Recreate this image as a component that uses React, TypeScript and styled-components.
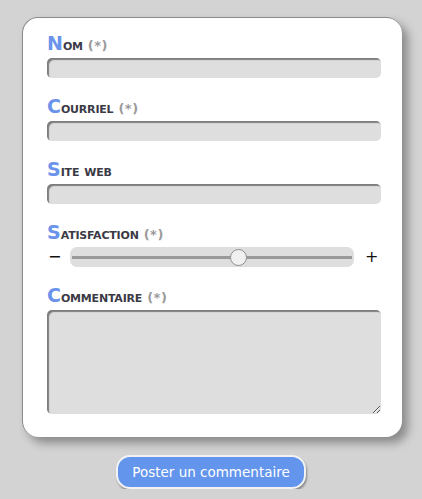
import React from "react";
import styled, { createGlobalStyle } from "styled-components";

const Global = createGlobalStyle`
  html, body { margin: 0; padding: 0; background: #d3d3d3; }
  body { font-family: "DejaVu Sans", sans-serif; }
`;

const Page = styled.div`
  display: flex;
  flex-direction: column;
  align-items: center;
  padding: 17px 0 0 0;
`;

const Card = styled.form`
  box-sizing: border-box;
  width: 380px;
  margin-left: 2px;
  background: #fff;
  border-radius: 16px;
  border-top: 1px solid #8a8a8a;
  border-left: 1px solid #8a8a8a;
  box-shadow: 6px 6px 10px rgba(0, 0, 0, 0.35);
  padding: 16px 20px 23px 24px;
  display: flex;
  flex-direction: column;
  gap: 19px;
`;

const Field = styled.div`
  display: flex;
  flex-direction: column;
  gap: 6px;
`;

const Label = styled.label`
  font-family: "DejaVu Sans", sans-serif;
  font-weight: bold;
  font-size: 15px;
  font-variant: small-caps;
  color: #3b3a45;
  line-height: 18px;
  height: 18px;
  display: flex;
  align-items: baseline;
  letter-spacing: -0.2px;
`;

const Initial = styled.span`
  font-size: 19px;
  color: #6b93eb;
  letter-spacing: 0;
`;

const Req = styled.span`
  color: #9a9a9a;
  font-variant: normal;
  font-size: 13px;
  margin-left: 5px;
  letter-spacing: 0.5px;
`;

const Input = styled.input`
  box-sizing: border-box;
  width: 334px;
  height: 20px;
  border: none;
  border-radius: 5px;
  background: #dedede;
  box-shadow: inset 2px 2px 1px #7e7e7e;
  outline: none;
  margin: 0;
`;

const SliderRow = styled.div`
  display: flex;
  align-items: center;
  width: 334px;
  height: 20px;
  color: #111;
`;

const Sign = styled.span<{ $right?: boolean }>`
  width: ${(p) => (p.$right ? "27px" : "23px")};
  box-sizing: border-box;
  font-family: "DejaVu Sans", sans-serif;
  font-size: 16px;
  line-height: 20px;
  padding-left: ${(p) => (p.$right ? "11px" : "1px")};
`;

const Range = styled.input`
  -webkit-appearance: none;
  appearance: none;
  flex: 1;
  margin: 0;
  height: 20px;
  border-radius: 7px;
  background: #dedede;
  padding: 0 2px;
  box-sizing: border-box;
  outline: none;
  &::-webkit-slider-runnable-track {
    height: 3px;
    background: #9a9a9a;
  }
  &::-webkit-slider-thumb {
    -webkit-appearance: none;
    width: 17px;
    height: 17px;
    margin-top: -7px;
    border-radius: 50%;
    background: #f0f0f0;
    border: 1px solid #8f8f8f;
    box-sizing: border-box;
  }
`;

const TextArea = styled.textarea`
  box-sizing: border-box;
  width: 334px;
  height: 104px;
  border: none;
  border-radius: 5px;
  background: #dedede;
  box-shadow: inset 2px 2px 1px #7e7e7e;
  outline: none;
  margin: 0;
  display: block;
`;

const Button = styled.button`
  margin-top: 18px;
  width: 190px;
  height: 34px;
  border-radius: 14px;
  border: 2px solid #f2f2f2;
  background: #6495ed;
  color: #fff;
  font-family: "DejaVu Sans", sans-serif;
  font-size: 13.5px;
  box-shadow: 1px 2px 2px rgba(0, 0, 0, 0.35);
  cursor: pointer;
`;

const FieldLabel = ({ text, req }: { text: string; req?: boolean }) => (
  <Label>
    <Initial>{text[0]}</Initial>
    {text.slice(1)}
    {req && <Req>(*)</Req>}
  </Label>
);

export default function App() {
  return (
    <>
      <Global />
      <Page>
        <Card>
          <Field>
            <FieldLabel text="Nom" req />
            <Input type="text" />
          </Field>
          <Field>
            <FieldLabel text="Courriel" req />
            <Input type="email" />
          </Field>
          <Field>
            <FieldLabel text="Site web" />
            <Input type="url" />
          </Field>
          <Field>
            <FieldLabel text="Satisfaction" req />
            <SliderRow>
              <Sign>−</Sign>
              <Range type="range" min={0} max={10} defaultValue={6} />
              <Sign $right>+</Sign>
            </SliderRow>
          </Field>
          <Field>
            <FieldLabel text="Commentaire" req />
            <TextArea />
          </Field>
        </Card>
        <Button type="button">Poster un commentaire</Button>
      </Page>
    </>
  );
}
